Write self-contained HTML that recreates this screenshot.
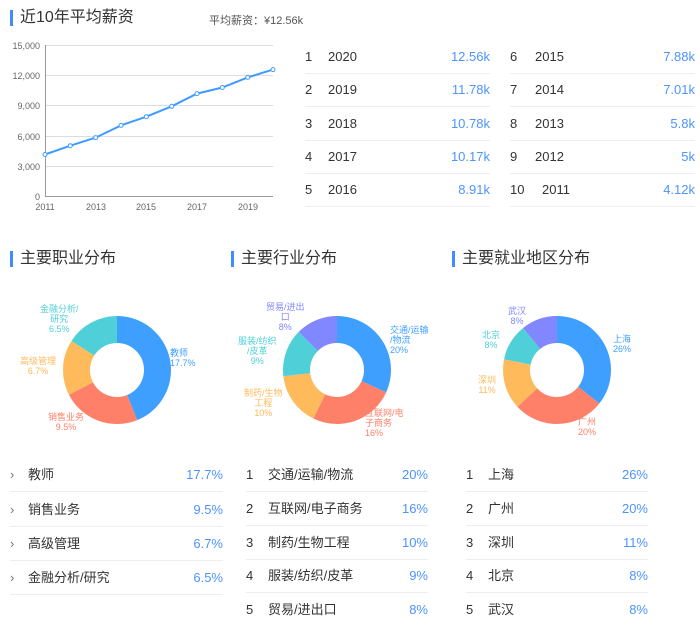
<!DOCTYPE html>
<html><head><meta charset="utf-8"><style>
*{margin:0;padding:0;box-sizing:border-box}
body{width:700px;height:627px;background:#fff;font-family:"Liberation Sans","Noto Sans CJK SC",sans-serif;color:#333;position:relative;overflow:hidden}
.abs{position:absolute}
.t{position:absolute;font-size:16px;color:#333;line-height:20px;padding-left:10px}
.t:before{content:"";position:absolute;left:0;top:2px;width:3px;height:16px;background:#3f8cff}
.row{position:absolute;height:34px;border-bottom:1px solid #eee;font-size:13px;line-height:34px;white-space:nowrap}
.row .v{position:absolute;right:0;top:0;color:#4d94ff}
.row .n{position:absolute;left:0}
.lbl{position:absolute;font-size:9px;line-height:10px;text-align:center}
</style></head><body>
<div class="t" style="left:10px;top:8px">近10年平均薪资</div>
<div class="abs" style="left:209px;top:12px;font-size:11px;color:#555">平均薪资：¥12.56k</div>
<svg class="abs" style="left:0;top:36px" width="300" height="180" viewBox="0 36 300 180" font-family="Liberation Sans" font-size="9" fill="#666">
<g stroke="#ddd" stroke-width="1">
<line x1="45" y1="45.5" x2="273" y2="45.5"/><line x1="45" y1="75.5" x2="273" y2="75.5"/><line x1="45" y1="105.5" x2="273" y2="105.5"/><line x1="45" y1="136.5" x2="273" y2="136.5"/><line x1="45" y1="166.5" x2="273" y2="166.5"/>
<line x1="45" y1="196.5" x2="273" y2="196.5" stroke="#999"/><line x1="45.5" y1="45" x2="45.5" y2="196" stroke="#999"/>
</g>
<g text-anchor="end"><text x="40" y="49">15,000</text><text x="40" y="79">12,000</text><text x="40" y="109">9,000</text><text x="40" y="140">6,000</text><text x="40" y="170">3,000</text><text x="40" y="200">0</text></g>
<g text-anchor="middle"><text x="45" y="210">2011</text><text x="96" y="210">2013</text><text x="146" y="210">2015</text><text x="197" y="210">2017</text><text x="248" y="210">2019</text></g>
<polyline fill="none" stroke="#3f9bff" stroke-width="2" points="45,154.5 70.3,145.7 95.7,137.6 121,125.4 146.3,116.7 171.7,106.3 197,93.6 222.3,87.5 247.7,77.4 273,69.6"/>
<g fill="#fff" stroke="#3f9bff" stroke-width="1"><circle cx="45" cy="154.5" r="2"/><circle cx="70.3" cy="145.7" r="2"/><circle cx="95.7" cy="137.6" r="2"/><circle cx="121" cy="125.4" r="2"/><circle cx="146.3" cy="116.7" r="2"/><circle cx="171.7" cy="106.3" r="2"/><circle cx="197" cy="93.6" r="2"/><circle cx="222.3" cy="87.5" r="2"/><circle cx="247.7" cy="77.4" r="2"/><circle cx="273" cy="69.6" r="2"/></g>
</svg>

<div class="row" style="left:305px;top:40px;width:185px"><span class="n">1</span><span class="abs" style="left:23px">2020</span><span class="v">12.56k</span></div>
<div class="row" style="left:305px;top:73px;width:185px"><span class="n">2</span><span class="abs" style="left:23px">2019</span><span class="v">11.78k</span></div>
<div class="row" style="left:305px;top:107px;width:185px"><span class="n">3</span><span class="abs" style="left:23px">2018</span><span class="v">10.78k</span></div>
<div class="row" style="left:305px;top:140px;width:185px"><span class="n">4</span><span class="abs" style="left:23px">2017</span><span class="v">10.17k</span></div>
<div class="row" style="left:305px;top:173px;width:185px"><span class="n">5</span><span class="abs" style="left:23px">2016</span><span class="v">8.91k</span></div>
<div class="row" style="left:510px;top:40px;width:185px"><span class="n">6</span><span class="abs" style="left:25px">2015</span><span class="v">7.88k</span></div>
<div class="row" style="left:510px;top:73px;width:185px"><span class="n">7</span><span class="abs" style="left:25px">2014</span><span class="v">7.01k</span></div>
<div class="row" style="left:510px;top:107px;width:185px"><span class="n">8</span><span class="abs" style="left:25px">2013</span><span class="v">5.8k</span></div>
<div class="row" style="left:510px;top:140px;width:185px"><span class="n">9</span><span class="abs" style="left:25px">2012</span><span class="v">5k</span></div>
<div class="row" style="left:510px;top:173px;width:185px"><span class="n">10</span><span class="abs" style="left:32px">2011</span><span class="v">4.12k</span></div>

<div class="t" style="left:10px;top:249px">主要职业分布</div>
<div class="t" style="left:231px;top:249px">主要行业分布</div>
<div class="t" style="left:452px;top:249px">主要就业地区分布</div>

<svg class="abs" style="left:0;top:300px" width="700" height="140" viewBox="0 300 700 140">
<g fill="none" stroke-width="27" transform="rotate(-90 117 370)">
<circle cx="117" cy="370" r="40.5" stroke="#3e9fff" stroke-dasharray="111.5 300"/>
<circle cx="117" cy="370" r="40.5" stroke="#ff8069" stroke-dasharray="0 111.5 59.8 300"/>
<circle cx="117" cy="370" r="40.5" stroke="#ffba5c" stroke-dasharray="0 171.3 42.2 300"/>
<circle cx="117" cy="370" r="40.5" stroke="#4fd0d8" stroke-dasharray="0 213.5 41 300"/>
</g>
<g fill="none" stroke-width="27" transform="rotate(-90 337 370)">
<circle cx="337" cy="370" r="40.5" stroke="#3e9fff" stroke-dasharray="80.8 300"/>
<circle cx="337" cy="370" r="40.5" stroke="#ff8069" stroke-dasharray="0 80.8 64.6 300"/>
<circle cx="337" cy="370" r="40.5" stroke="#ffba5c" stroke-dasharray="0 145.4 40.4 300"/>
<circle cx="337" cy="370" r="40.5" stroke="#4fd0d8" stroke-dasharray="0 185.8 36.4 300"/>
<circle cx="337" cy="370" r="40.5" stroke="#8087ff" stroke-dasharray="0 222.2 32.3 300"/>
</g>
<g fill="none" stroke-width="27" transform="rotate(-90 557 370)">
<circle cx="557" cy="370" r="40.5" stroke="#3e9fff" stroke-dasharray="90.6 300"/>
<circle cx="557" cy="370" r="40.5" stroke="#ff8069" stroke-dasharray="0 90.6 69.7 300"/>
<circle cx="557" cy="370" r="40.5" stroke="#ffba5c" stroke-dasharray="0 160.3 38.4 300"/>
<circle cx="557" cy="370" r="40.5" stroke="#4fd0d8" stroke-dasharray="0 198.7 27.9 300"/>
<circle cx="557" cy="370" r="40.5" stroke="#8087ff" stroke-dasharray="0 226.6 27.9 300"/>
</g>
</svg>
<div class="lbl" style="left:170px;top:348px;color:#3e9fff;text-align:left">教师<br>17.7%</div>
<div class="lbl" style="left:48px;top:412px;color:#ff8069">销售业务<br>9.5%</div>
<div class="lbl" style="left:20px;top:356px;color:#ffba5c">高级管理<br>6.7%</div>
<div class="lbl" style="left:40px;top:304px;color:#4fd0d8">金融分析/<br>研究<br>6.5%</div>
<div class="lbl" style="left:390px;top:325px;color:#3e9fff;text-align:left">交通/运输<br>/物流<br>20%</div>
<div class="lbl" style="left:365px;top:408px;color:#ff8069;text-align:left">互联网/电<br>子商务<br>16%</div>
<div class="lbl" style="left:244px;top:388px;color:#ffba5c">制药/生物<br>工程<br>10%</div>
<div class="lbl" style="left:238px;top:336px;color:#4fd0d8">服装/纺织<br>/皮革<br>9%</div>
<div class="lbl" style="left:266px;top:302px;color:#8087ff">贸易/进出<br>口<br>8%</div>
<div class="lbl" style="left:613px;top:334px;color:#3e9fff">上海<br>26%</div>
<div class="lbl" style="left:578px;top:417px;color:#ff8069">广州<br>20%</div>
<div class="lbl" style="left:478px;top:375px;color:#ffba5c">深圳<br>11%</div>
<div class="lbl" style="left:482px;top:330px;color:#4fd0d8">北京<br>8%</div>
<div class="lbl" style="left:508px;top:306px;color:#8087ff">武汉<br>8%</div>

<div class="row" style="left:10px;top:458px;width:213px"><span class="n" style="color:#777">›</span><span class="abs" style="left:18px">教师</span><span class="v">17.7%</span></div>
<div class="row" style="left:10px;top:493px;width:213px"><span class="n" style="color:#777">›</span><span class="abs" style="left:18px">销售业务</span><span class="v">9.5%</span></div>
<div class="row" style="left:10px;top:527px;width:213px"><span class="n" style="color:#777">›</span><span class="abs" style="left:18px">高级管理</span><span class="v">6.7%</span></div>
<div class="row" style="left:10px;top:561px;width:213px"><span class="n" style="color:#777">›</span><span class="abs" style="left:18px">金融分析/研究</span><span class="v">6.5%</span></div>

<div class="row" style="left:246px;top:458px;width:182px"><span class="n">1</span><span class="abs" style="left:22px">交通/运输/物流</span><span class="v">20%</span></div>
<div class="row" style="left:246px;top:492px;width:182px"><span class="n">2</span><span class="abs" style="left:22px">互联网/电子商务</span><span class="v">16%</span></div>
<div class="row" style="left:246px;top:526px;width:182px"><span class="n">3</span><span class="abs" style="left:22px">制药/生物工程</span><span class="v">10%</span></div>
<div class="row" style="left:246px;top:559px;width:182px"><span class="n">4</span><span class="abs" style="left:22px">服装/纺织/皮革</span><span class="v">9%</span></div>
<div class="row" style="left:246px;top:593px;width:182px;border-bottom:none"><span class="n">5</span><span class="abs" style="left:22px">贸易/进出口</span><span class="v">8%</span></div>

<div class="row" style="left:466px;top:458px;width:182px"><span class="n">1</span><span class="abs" style="left:22px">上海</span><span class="v">26%</span></div>
<div class="row" style="left:466px;top:492px;width:182px"><span class="n">2</span><span class="abs" style="left:22px">广州</span><span class="v">20%</span></div>
<div class="row" style="left:466px;top:526px;width:182px"><span class="n">3</span><span class="abs" style="left:22px">深圳</span><span class="v">11%</span></div>
<div class="row" style="left:466px;top:559px;width:182px"><span class="n">4</span><span class="abs" style="left:22px">北京</span><span class="v">8%</span></div>
<div class="row" style="left:466px;top:593px;width:182px;border-bottom:none"><span class="n">5</span><span class="abs" style="left:22px">武汉</span><span class="v">8%</span></div>
</body></html>
